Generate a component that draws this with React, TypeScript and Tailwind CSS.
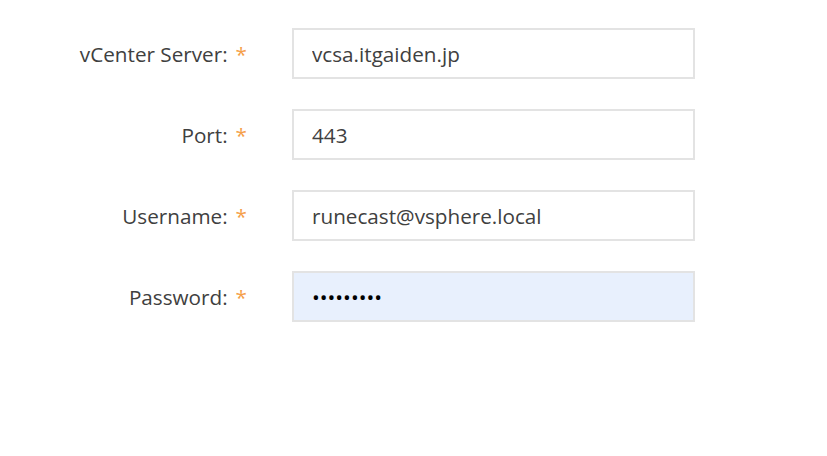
const fields = [
  { label: 'vCenter Server:', value: 'vcsa.itgaiden.jp', type: 'text' },
  { label: 'Port:', value: '443', type: 'text' },
  { label: 'Username:', value: 'runecast@vsphere.local', type: 'text' },
  { label: 'Password:', value: 'password1', type: 'password' },
];

export default function App() {
  return (
    <div className="w-[827px] h-[456px] bg-white font-['Open_Sans',sans-serif] text-[#404040]">
      <div className="flex flex-col gap-[30px] pt-[28px]">
        {fields.map((f) => (
          <div key={f.label} className="flex items-center">
            <label className="w-[247px] pt-[2px] text-right text-[20.7px] font-normal">
              {f.label}
              <span className="ml-[8px] text-[#f5a04a]">*</span>
            </label>
            <input
              type={f.type}
              defaultValue={f.value}
              readOnly
              className={`ml-[45px] w-[403px] h-[51px] border-2 border-[#e3e3e3] px-[18px] pt-[1px] text-[20.7px] outline-none ${
                f.type === 'password' ? 'bg-[#e8f0fd] text-black' : 'bg-white text-[#404040]'
              }`}
            />
          </div>
        ))}
      </div>
    </div>
  );
}
